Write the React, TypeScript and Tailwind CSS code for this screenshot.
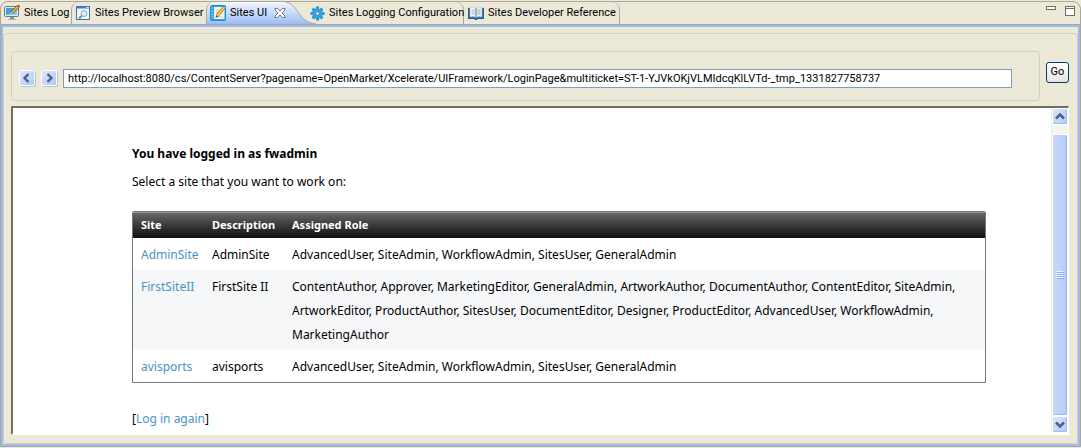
import type { ReactNode } from "react";

interface Site {
  name: string;
  description: string;
  roles: string[];
}

const SITES: Site[] = [
  {
    name: "AdminSite",
    description: "AdminSite",
    roles: ["AdvancedUser", "SiteAdmin", "WorkflowAdmin", "SitesUser", "GeneralAdmin"],
  },
  {
    name: "FirstSiteII",
    description: "FirstSite II",
    roles: [
      "ContentAuthor",
      "Approver",
      "MarketingEditor",
      "GeneralAdmin",
      "ArtworkAuthor",
      "DocumentAuthor",
      "ContentEditor",
      "SiteAdmin",
      "ArtworkEditor",
      "ProductAuthor",
      "SitesUser",
      "DocumentEditor",
      "Designer",
      "ProductEditor",
      "AdvancedUser",
      "WorkflowAdmin",
      "MarketingAuthor",
    ],
  },
  {
    name: "avisports",
    description: "avisports",
    roles: ["AdvancedUser", "SiteAdmin", "WorkflowAdmin", "SitesUser", "GeneralAdmin"],
  },
];

const PAGE_URL =
  "http://localhost:8080/cs/ContentServer?pagename=OpenMarket/Xcelerate/UIFramework/LoginPage&multiticket=ST-1-YJVkOKjVLMIdcqKlLVTd-_tmp_1331827758737";

export default function App() {
  return (
    <div className="flex min-h-screen flex-col bg-[#ece9d8] py-px font-[Roboto,sans-serif] text-[11px] text-black">
      <div className="flex flex-1 flex-col rounded-t-lg border border-[#aca899]">
        <TabStrip />
        <div className="flex flex-1 flex-col border-2 border-[#99baf3] pt-1.5">
          <div className="flex flex-1 flex-col gap-[5px] rounded-[4px] border border-[#d0d0bf] pt-[17px] pr-2 pb-2 pl-[7px]">
            <AddressBar />
            <div className="flex flex-1 border-2 border-t-[#716f64] border-r border-r-white border-b-white border-l-[#716f64] bg-white">
              <SitePicker />
              <ScrollBar />
            </div>
          </div>
        </div>
      </div>
    </div>
  );
}

function TabStrip() {
  return (
    <div className="flex h-[23px] items-stretch border-b border-[#aca899]">
      <div role="tablist" className="flex flex-1 items-stretch">
        <Tab className="w-[70px] pl-[3px]" icon={<MonitorIcon />} label="Sites Log" />
        <Tab
          className="w-[135px] rounded-tl-lg border-l border-[#aca899] pl-1"
          icon={<PreviewIcon />}
          label="Sites Preview Browser"
        />
        <div className="flex w-20 items-center justify-between rounded-tl-lg border-l border-[#aca899] bg-linear-to-b from-[#f4f7fe] to-[#9cbcf4]">
          <Tab selected className="h-full pl-[3px]" icon={<NotepadIcon />} label="Sites UI" />
          <button type="button" aria-label="Close Sites UI" className="shrink-0">
            <CloseIcon />
          </button>
        </div>
        <TabCurve />
        <Tab
          className="w-[154px] rounded-tr-lg border-r border-[#aca899]"
          icon={<GearIcon />}
          label="Sites Logging Configuration"
        />
        <Tab
          className="w-[156px] rounded-tr-lg border-r border-[#aca899] pl-1"
          icon={<BookIcon />}
          label="Sites Developer Reference"
        />
      </div>
      <div className="flex items-start gap-2 pt-1 pr-[5px]">
        <button type="button" aria-label="Minimize">
          <svg width="11" height="4" viewBox="0 0 11 4" className="block">
            <rect x="0.5" y="0.5" width="9" height="3" fill="#fff" stroke="#716f64" />
          </svg>
        </button>
        <button type="button" aria-label="Maximize">
          <svg width="10" height="10" viewBox="0 0 10 10" className="block">
            <rect x="0.5" y="0.5" width="9" height="9" fill="#fff" stroke="#716f64" />
            <path d="M0 2.5h10" stroke="#716f64" />
          </svg>
        </button>
      </div>
    </div>
  );
}

interface TabProps {
  icon: ReactNode;
  label: string;
  className: string;
  selected?: boolean;
}

function Tab({ icon, label, className, selected = false }: TabProps) {
  return (
    <button
      type="button"
      role="tab"
      aria-selected={selected}
      className={`flex items-center gap-1 text-left whitespace-nowrap ${className}`}
    >
      {icon}
      <span>{label}</span>
    </button>
  );
}

function AddressBar() {
  return (
    <div className="flex items-start gap-1.5">
      <div className="flex h-[50px] flex-1 items-center gap-1.5 rounded-[4px] border border-[#d0d0bf] pt-1 pr-[27px] pl-[7px]">
        <NavButton label="Back" d="M9.5 4 5.5 8l4 4" />
        <NavButton label="Forward" d="M6.5 4l4 4-4 4" />
        <input
          type="text"
          aria-label="Address"
          defaultValue={PAGE_URL}
          className="h-[19px] min-w-0 flex-1 border border-[#7f9db9] bg-white px-1 outline-none"
        />
      </div>
      <button
        type="button"
        className="mt-[11px] h-[21px] w-[23px] rounded-[3px] border border-[#003c74] bg-linear-to-b from-white to-[#e6e5db]"
      >
        Go
      </button>
    </div>
  );
}

function NavButton({ label, d }: { label: string; d: string }) {
  return (
    <button
      type="button"
      aria-label={label}
      className="h-4 w-4 rounded-[2px] border border-white bg-linear-to-br from-[#dbe5fd] to-[#b3c8f8] shadow-[1px_1px_0_#b9c3d8]"
    >
      <svg viewBox="1 1 14 14" className="block h-full w-full" fill="none" stroke="#4d6185" strokeWidth="2.4">
        <path d={d} />
      </svg>
    </button>
  );
}

function SitePicker() {
  return (
    <main className="flex-1 pt-[34px] pr-[65px] pb-0.5 pl-[119px] font-['Noto_Sans',sans-serif] text-[12px] leading-6">
      <h1 className="font-bold">You have logged in as fwadmin</h1>
      <p className="mt-1">Select a site that you want to work on:</p>
      <table className="mt-[17px] w-full table-fixed border-separate border-spacing-0 rounded-t-[2px] border border-[#767676]">
        <thead>
          <tr className="bg-linear-to-b from-[#6b6b6b] to-[#111] text-left leading-[26px] text-white shadow-[inset_0_1px_0_#999]">
            <th className="w-[71px] px-2 text-[11px]">Site</th>
            <th className="w-20 px-2 text-[11px]">Description</th>
            <th className="px-2 text-[11px]">Assigned Role</th>
          </tr>
        </thead>
        <tbody>
          {SITES.map((site) => (
            <tr key={site.name} className="align-top even:bg-[#f6f7f9]">
              <td className="px-2 pt-[5px] pb-[3px]">
                <a href="#" className="text-[#4a94c4]">
                  {site.name}
                </a>
              </td>
              <td className="px-2 pt-[5px] pb-[3px] whitespace-nowrap">{site.description}</td>
              <td className="px-2 pt-[5px] pb-[3px]">{site.roles.join(", ")}</td>
            </tr>
          ))}
        </tbody>
      </table>
      <p className="mt-6">
        [
        <a href="#" className="text-[#4a94c4]">
          Log in again
        </a>
        ]
      </p>
    </main>
  );
}

function ScrollBar() {
  return (
    <div className="flex w-[17px] flex-col border-l border-[#eeede5] bg-[#f5f4ef]">
      <ScrollButton label="Scroll up" d="M4 10l4-4 4 4" />
      <div className="mt-[9px] flex flex-1 items-center justify-center rounded-[2px] border border-white bg-linear-to-r from-[#c9d8fc] to-[#b6cbf9] shadow-[inset_-1px_-1px_0_#98b4ea]">
        <svg width="8" height="8" viewBox="0 0 8 8">
          <path d="M0 .5h7M0 2.5h7M0 4.5h7M0 6.5h7" stroke="#eef4fe" />
          <path d="M1 1.5h7M1 3.5h7M1 5.5h7M1 7.5h7" stroke="#8cb0f8" />
        </svg>
      </div>
      <ScrollButton label="Scroll down" d="M4 6l4 4 4-4" />
    </div>
  );
}

function ScrollButton({ label, d }: { label: string; d: string }) {
  return (
    <button
      type="button"
      aria-label={label}
      className="h-[17px] w-4 rounded-[2px] border border-white bg-linear-to-br from-[#dbe5fd] to-[#b3c8f8] shadow-[inset_-1px_-1px_0_#a3bbea]"
    >
      <svg viewBox="1 1 14 14" className="block h-full w-full" fill="none" stroke="#4d6185" strokeWidth="2.6">
        <path d={d} />
      </svg>
    </button>
  );
}

// Sloping right edge of the selected tab
function TabCurve() {
  return (
    <svg width="30" height="22" viewBox="0 0 30 22" className="-mr-1.5 block shrink-0">
      <defs>
        <linearGradient id="tab-fill" x1="0" y1="0" x2="0" y2="1">
          <stop offset="0" stopColor="#f4f7fe" />
          <stop offset="1" stopColor="#9cbcf4" />
        </linearGradient>
      </defs>
      <path d="M0 0C8 2 10 8 15 14C19 19 23 21 30 22H0z" fill="url(#tab-fill)" />
      <path d="M0 0C8 2 10 8 15 14C19 19 23 21 30 22" fill="none" stroke="#aca899" />
    </svg>
  );
}

function CloseIcon() {
  return (
    <svg width="12" height="12" viewBox="0 0 12 12" className="block">
      <path
        d="M1 1.5h2.5L6 4l2.5-2.5H11V3L8 6l3 3v1.5H8.5L6 8l-2.5 2.5H1V9l3-3-3-3z"
        fill="#fff"
        stroke="#77777b"
      />
    </svg>
  );
}

function MonitorIcon() {
  return (
    <svg width="16" height="16" viewBox="0 0 16 16" className="shrink-0">
      <rect x="0.5" y="1.5" width="14" height="10" rx="1" fill="#e4e9ec" stroke="#6b7885" />
      <rect x="2" y="3" width="11" height="7" fill="#3fa0dc" />
      <path d="M2 10l11-5v5z" fill="#7cc6ef" />
      <path d="M6 12h4v2H6z" fill="#8a949c" />
      <path d="M4 14.5h8" stroke="#aeb5ba" />
      <path d="M14.5 1L8 7.5" stroke="#7a5a14" strokeWidth="3" />
      <path d="M14 1.5L8 7.5" stroke="#f3c93c" strokeWidth="1.6" />
      <path d="M14 0l1.8 1.8" stroke="#c04a38" strokeWidth="1.5" />
    </svg>
  );
}

function PreviewIcon() {
  return (
    <svg width="15" height="15" viewBox="0 0 15 15" className="shrink-0">
      <rect x="0.5" y="0.5" width="13" height="13" fill="#f4f8fd" stroke="#3f6fae" />
      <path d="M0 1.5h14" stroke="#3b78c8" strokeWidth="2" />
      <path d="M10 1.5h3" stroke="#cfe0f5" />
      <circle cx="8" cy="7.5" r="3" fill="#d7ecfb" stroke="#9aa9ba" />
      <path d="M5.8 9.7L3 12.5" stroke="#8b8f98" strokeWidth="2" />
    </svg>
  );
}

function NotepadIcon() {
  return (
    <svg width="16" height="16" viewBox="0 0 16 16" className="shrink-0">
      <rect x="0.5" y="0.5" width="15" height="15" rx="1" fill="#2ea4e6" stroke="#1a8fd2" />
      <path d="M4 2h10.5v12H4z" fill="#f6f4e8" />
      <path d="M6 5h5M6 7.5h4M6 12h7" stroke="#c3c8cc" />
      <path d="M1 3h2M1 6h2M1 9h2M1 12h2" stroke="#8fd3f7" />
      <path d="M14.5 2L7 11" stroke="#967126" strokeWidth="3" />
      <path d="M14.5 2L7 11" stroke="#f5d352" strokeWidth="1.8" />
      <path d="M5.5 12.8l.6-2.6 2 1.6z" fill="#50473a" />
    </svg>
  );
}

function GearIcon() {
  return (
    <svg width="15" height="15" viewBox="-7.5 -7.5 15 15" className="relative shrink-0">
      <g stroke="#2592d6" strokeWidth="3">
        <path d="M0-7V7M-7 0H7" />
        <path d="M-4.9-4.9L4.9 4.9M-4.9 4.9L4.9-4.9" />
      </g>
      <circle r="4.3" fill="#3eaaea" stroke="#2fa0e4" strokeWidth="2" />
      <circle r="2.1" fill="#ece9d8" stroke="#1d7fc0" />
    </svg>
  );
}

function BookIcon() {
  return (
    <svg width="16" height="15" viewBox="0 0 16 15" className="shrink-0">
      <path d="M0 2h16v11h-6l-1 1H7l-1-1H0z" fill="#2d6298" />
      <path d="M2 1.5Q5.5 .5 8 2.5V11.5Q5.5 10 2 11z" fill="#f7f9fb" stroke="#a9bccd" strokeWidth="0.5" />
      <path d="M14 1.5Q10.5 .5 8 2.5V11.5Q10.5 10 14 11z" fill="#e6edf3" stroke="#a9bccd" strokeWidth="0.5" />
      <path d="M3.5 4h3M3.5 6h3M3.5 8h3M9.5 4h3M9.5 6h3M9.5 8h3" stroke="#a6adb5" />
      <path d="M8 2.5V12" stroke="#6d8298" />
    </svg>
  );
}
